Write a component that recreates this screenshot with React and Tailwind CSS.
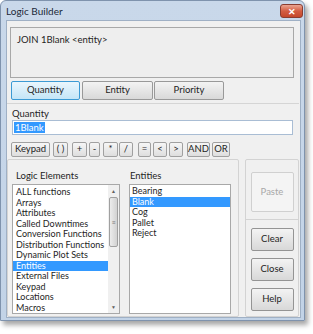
import React from 'react';

const font = { fontFamily: 'Lato, "Liberation Sans", sans-serif' };

const elements = [
    'ALL functions', 'Arrays', 'Attributes', 'Called Downtimes', 'Conversion Functions',
    'Distribution Functions', 'Dynamic Plot Sets', 'Entities', 'External Files', 'Keypad',
    'Locations', 'Macros',
];
const entities = ['Bearing', 'Blank', 'Cog', 'Pallet', 'Reject'];

// label, width, left margin
const ops = [
    ['Keypad', 'w-[39px]', 'ml-0'],
    ['( )', 'w-[15px]', 'ml-[3px]'],
    ['+', 'w-[15px]', 'ml-[4px]'],
    ['-', 'w-[11px]', 'ml-[2px]'],
    ['*', 'w-[15px]', 'ml-[3px]'],
    ['/', 'w-[14px]', 'ml-[1px]'],
    ['=', 'w-[13px]', 'ml-[5px]'],
    ['<', 'w-[14px]', 'ml-[2px]'],
    ['>', 'w-[14px]', 'ml-[2px]'],
    ['AND', 'w-[23px]', 'ml-[4px]'],
    ['OR', 'w-[18px]', 'ml-[2px]'],
];

const SmallBtn = ({ label, w, extra }) => (
    <div className={`${w} ${extra} h-[15px] flex items-center justify-center border border-[#a0a0a0] rounded-[2px] bg-gradient-to-b from-[#f6f6f6] to-[#dedede] text-[9.5px] text-[#1e1e1e]`}>
        {label}
    </div>
);

const SideBtn = ({ label }) => (
    <div className="w-[43px] h-[23px] flex items-center justify-center rounded-[2px] border border-[#949494] bg-gradient-to-b from-[#f3f3f3] to-[#d8d8d8] text-[9.5px] text-[#1e1e1e]">
        {label}
    </div>
);

const Tab = ({ label, w, active, extra }) => (
    <div className={`${w} ${extra} h-[19px] flex items-center justify-center rounded-[2px] border text-[9.5px] text-[#1e1e1e] ${active ? 'border-[#3c9ad4] bg-gradient-to-b from-[#eaf6fd] to-[#c4e5f7]' : 'border-[#999] bg-gradient-to-b from-[#f3f3f3] to-[#d9d9d9]'}`}>
        {label}
    </div>
);

export default function App() {
    return (
        <div className="w-[313px] h-[334px] bg-white overflow-hidden" style={font}>
            <div className="w-[305px] h-[321px] flex flex-col border border-[#7f93ad] rounded-t-[6px] bg-gradient-to-b from-[#c9d8ea] to-[#c2d3e7] shadow-[3px_4px_5px_rgba(0,0,0,0.35)]">
                <div className="h-[19px] flex items-center justify-between pl-[5px] pr-[1px]">
                    <span className="text-[10px] text-[#1c2838] mt-[1px]">Logic Builder</span>
                    <div className="w-[23px] h-[14px] mt-[1px] rounded-[3px] border border-[#8a3d30] bg-gradient-to-b from-[#eaa592] via-[#d35d42] to-[#c5472b] flex items-center justify-center text-white text-[9px] font-bold leading-none">
                        ✕
                    </div>
                </div>
                <div className="h-[298px] ml-[5px] mr-[3px] border border-[#9fb0c5] bg-[#f0f0f0] flex flex-col pr-[1px]">
                    <div className="h-[51px] mt-[6px] ml-[3px] mr-[5px] border border-[#a8a8a8] bg-[#eeeeee] px-[6px] pt-[6px] text-[9.5px] text-[#1e1e1e] leading-[12px]">
                        JOIN 1Blank &lt;entity&gt;
                    </div>
                    <div className="flex mt-[3px] ml-[4px]">
                        <Tab label="Quantity" w="w-[69px]" active extra="" />
                        <Tab label="Entity" w="w-[71px]" extra="ml-[2px]" />
                        <Tab label="Priority" w="w-[70px]" extra="ml-[1px]" />
                    </div>
                    <div className="mt-[3px] border-t border-[#d5d5d5]" />
                    <div className="pt-[4px] pl-[5px] pr-[6px]">
                        <div className="text-[9.5px] text-[#1e1e1e] leading-[12px]">Quantity</div>
                        <div className="h-[15px] border border-[#a9bdd4] bg-white flex items-center px-[1px]">
                            <span className="bg-[#3399ff] text-white text-[9.5px] leading-[11px] px-[1px]">1Blank</span>
                        </div>
                    </div>
                    <div className="flex mt-[7px] ml-[4px]">
                        {ops.map(([l, w, e]) => <SmallBtn key={l} label={l} w={w} extra={e} />)}
                    </div>
                    <div className="flex mt-[2px] h-[158px]">
                        <div className="w-[232px] border border-[#d3d3d3] rounded-[2px] flex pl-[4px] pt-[10px] pb-[2px]">
                            <div className="flex flex-col w-[108px]">
                                <div className="text-[9.5px] text-[#1e1e1e] leading-[12px] ml-[4px]">Logic Elements</div>
                                <div className="flex-1 mt-[2px] border border-[#a8a8a8] bg-white flex overflow-hidden">
                                    <div className="flex-1 pt-[2px] overflow-hidden">
                                        {elements.map((e) => (
                                            <div key={e} className={`text-[9px] leading-[10.5px] h-[10.5px] pl-[3px] whitespace-nowrap ${e === 'Entities' ? 'bg-[#3399ff] text-white' : 'text-[#1e1e1e]'}`}>{e}</div>
                                        ))}
                                    </div>
                                    <div className="w-[11px] flex flex-col items-center bg-[#f0f0f0]">
                                        <div className="h-[12px] text-[5px] text-[#606060] leading-[12px]">▲</div>
                                        <div className="w-[9px] h-[50px] rounded-[2px] border border-[#a0a0a0] bg-gradient-to-r from-[#ececec] to-[#d2d2d2] flex items-center justify-center text-[7px] text-[#7a7a7a]">≡</div>
                                        <div className="flex-1" />
                                        <div className="h-[12px] text-[5px] text-[#606060] leading-[12px]">▼</div>
                                    </div>
                                </div>
                            </div>
                            <div className="flex flex-col w-[102px] ml-[9px]">
                                <div className="text-[9.5px] text-[#1e1e1e] leading-[12px] ml-[1px]">Entities</div>
                                <div className="flex-1 mt-[2px] border border-[#a8a8a8] bg-white pt-[1px]">
                                    {entities.map((e) => (
                                        <div key={e} className={`text-[9px] leading-[10.5px] h-[10.5px] pl-[2px] ${e === 'Blank' ? 'bg-[#3399ff] text-white' : 'text-[#1e1e1e]'}`}>{e}</div>
                                    ))}
                                </div>
                            </div>
                        </div>
                        <div className="w-[54px] ml-[6px] border border-[#d3d3d3] rounded-[2px] flex flex-col items-center pt-[12px]">
                            <div className="w-[43px] h-[40px] flex items-center justify-center rounded-[2px] border border-[#d0d0d0] bg-[#f4f4f4] text-[9.5px] text-[#a8a8a8]">Paste</div>
                            <div className="w-full border-t border-[#d3d3d3] mt-[7px] mb-[8px]" />
                            <div className="flex flex-col gap-[7px]">
                                <SideBtn label="Clear" />
                                <SideBtn label="Close" />
                                <SideBtn label="Help" />
                            </div>
                        </div>
                    </div>
                </div>
            </div>
        </div>
    );
}
